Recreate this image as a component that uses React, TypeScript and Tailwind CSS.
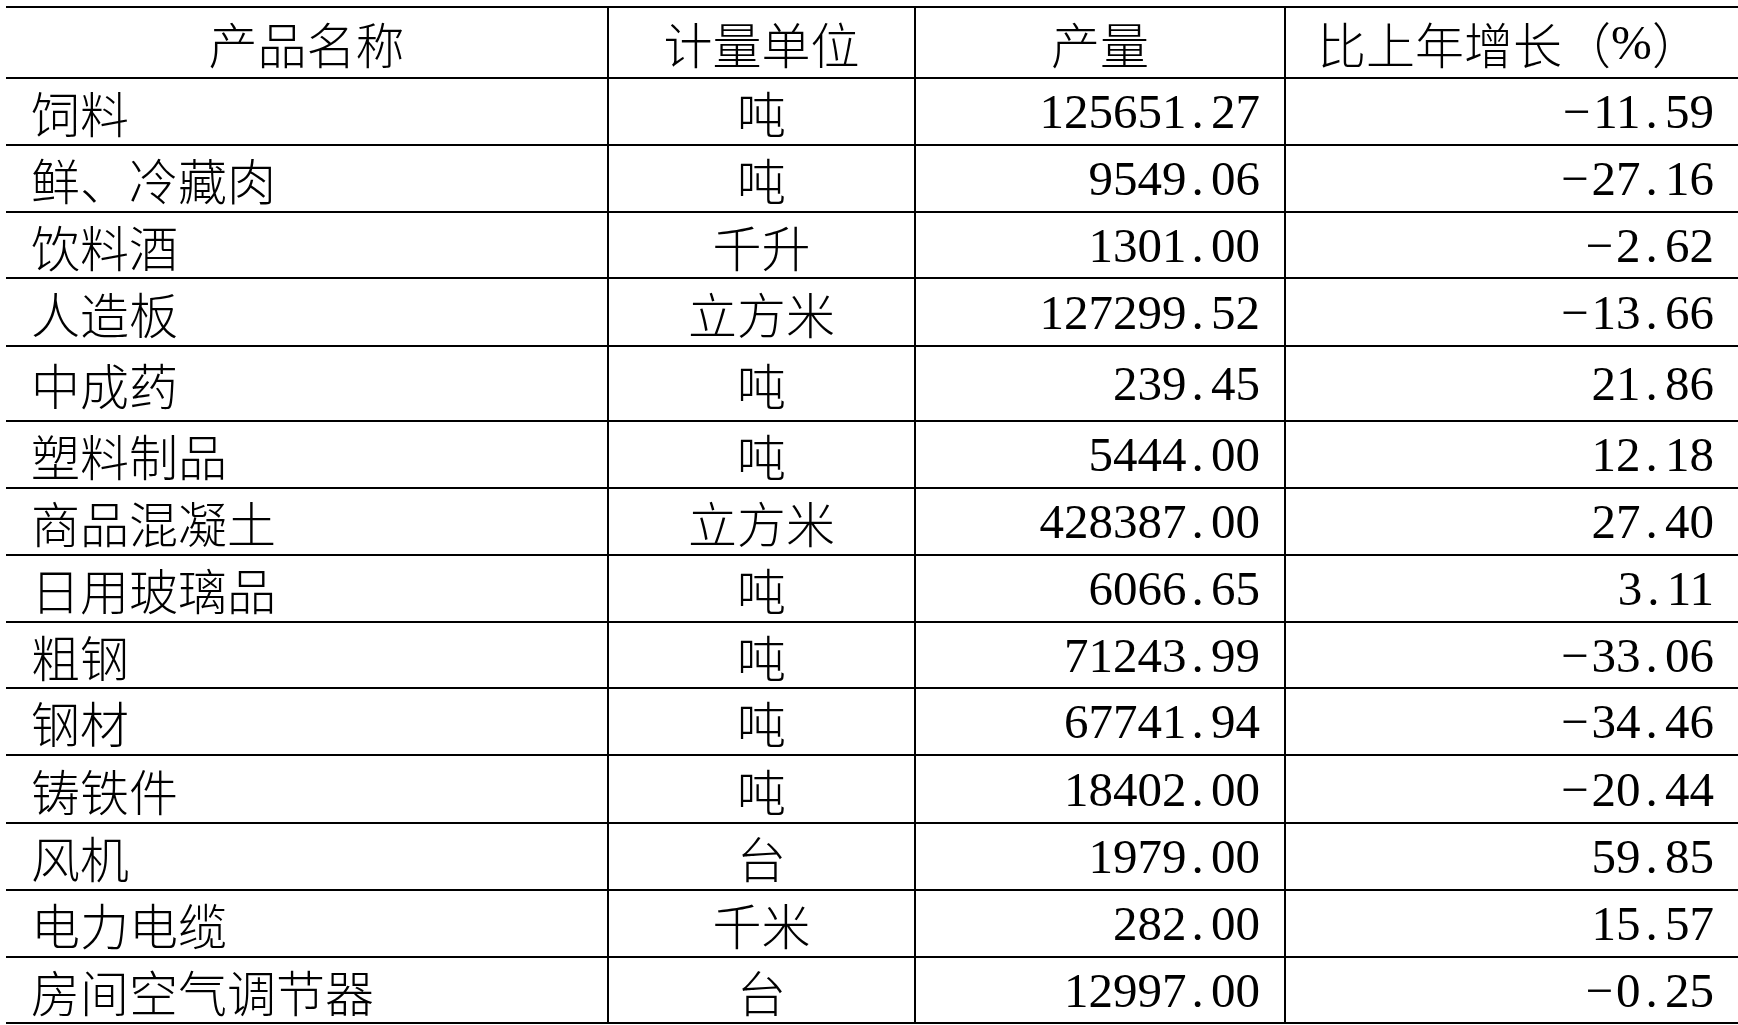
import React from "react";

type Row = { name: string; unit: string; output: string; growth: string; h: string };

const rows: Row[] = [
  { name: "饲料", unit: "吨", output: "125651.27", growth: "-11.59", h: "h-[67px]" },
  { name: "鲜、冷藏肉", unit: "吨", output: "9549.06", growth: "-27.16", h: "h-[67px]" },
  { name: "饮料酒", unit: "千升", output: "1301.00", growth: "-2.62", h: "h-[66px]" },
  { name: "人造板", unit: "立方米", output: "127299.52", growth: "-13.66", h: "h-[68px]" },
  { name: "中成药", unit: "吨", output: "239.45", growth: "21.86", h: "h-[75px]" },
  { name: "塑料制品", unit: "吨", output: "5444.00", growth: "12.18", h: "h-[67px]" },
  { name: "商品混凝土", unit: "立方米", output: "428387.00", growth: "27.40", h: "h-[67px]" },
  { name: "日用玻璃品", unit: "吨", output: "6066.65", growth: "3.11", h: "h-[67px]" },
  { name: "粗钢", unit: "吨", output: "71243.99", growth: "-33.06", h: "h-[66px]" },
  { name: "钢材", unit: "吨", output: "67741.94", growth: "-34.46", h: "h-[67px]" },
  { name: "铸铁件", unit: "吨", output: "18402.00", growth: "-20.44", h: "h-[68px]" },
  { name: "风机", unit: "台", output: "1979.00", growth: "59.85", h: "h-[67px]" },
  { name: "电力电缆", unit: "千米", output: "282.00", growth: "15.57", h: "h-[67px]" },
  { name: "房间空气调节器", unit: "台", output: "12997.00", growth: "-0.25", h: "h-[66px]" },
];

const cjk = "font-['Noto_Sans_CJK_SC',sans-serif]";
const grid = "grid grid-cols-[603px_307px_370px_1fr] border-b-2 border-black";

function Num({ value }: { value: string }) {
  return (
    <span className="font-['Liberation_Serif',serif] whitespace-nowrap">
      {value.split("").map((c, i) =>
        c === "." ? (
          <span key={i} className="inline-block w-[0.5em] text-left pl-[0.1em]">.</span>
        ) : c === "-" ? (
          <span key={i} className="inline-block w-[0.62em] text-left">−</span>
        ) : (
          <span key={i}>{c}</span>
        )
      )}
    </span>
  );
}

export default function App() {
  return (
    <div className="w-[1738px] h-[1025px] overflow-hidden bg-white text-black">
      <div className={`ml-[6px] mt-[6px] border-t-2 border-black text-[49px] leading-none font-light ${cjk}`}>
        <div className={`${grid} h-[71px]`}>
          <div className="flex items-center justify-center border-r-2 border-black">产品名称</div>
          <div className="flex items-center justify-center border-r-2 border-black">计量单位</div>
          <div className="flex items-center justify-center border-r-2 border-black">产量</div>
          <div className="flex items-center justify-center pr-[6px]">
            比上年增长（<span className="font-['Liberation_Serif',serif]">%</span>）
          </div>
        </div>
        {rows.map((r) => (
          <div key={r.name} className={`${grid} ${r.h}`}>
            <div className="flex items-center pl-[25px] border-r-2 border-black">{r.name}</div>
            <div className="flex items-center justify-center border-r-2 border-black">{r.unit}</div>
            <div className="flex items-center justify-end pr-[24px] border-r-2 border-black">
              <Num value={r.output} />
            </div>
            <div className="flex items-center justify-end pr-[24px]">
              <Num value={r.growth} />
            </div>
          </div>
        ))}
      </div>
    </div>
  );
}
